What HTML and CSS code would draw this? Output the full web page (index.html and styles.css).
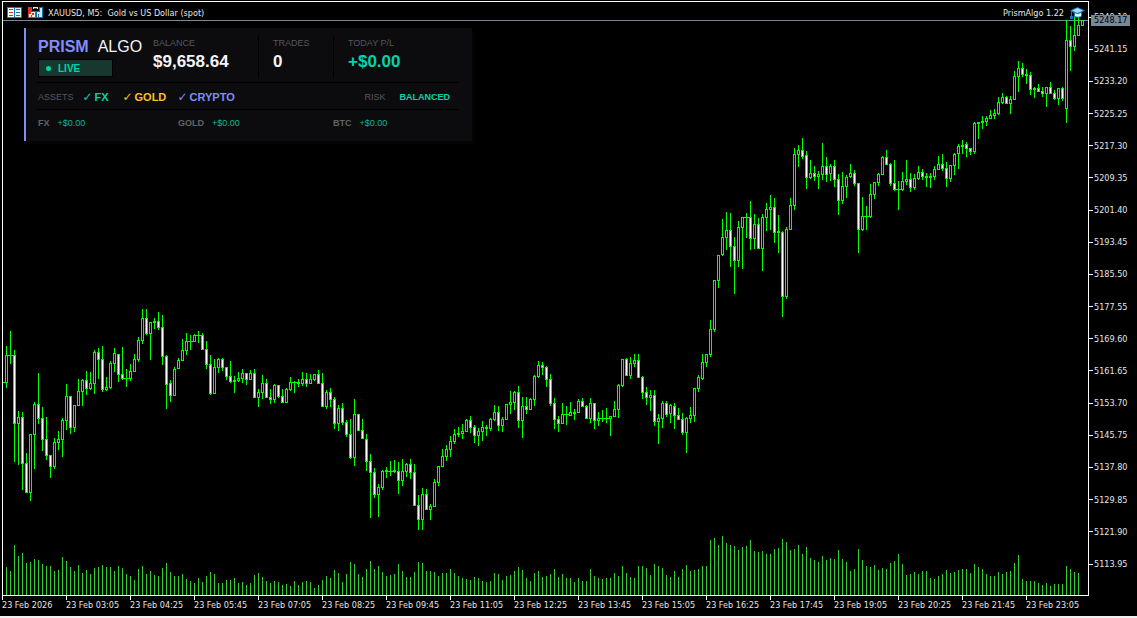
FILE: index.html
```
<!DOCTYPE html>
<html lang="en">
<head>
<meta charset="utf-8">
<title>XAUUSD, M5</title>
<link rel="stylesheet" href="styles.css">
</head>
<body>
<main class="terminal">
  <section class="plot">
    <svg class="chart" id="chart" viewBox="3 2 1085 593" preserveAspectRatio="none" role="img" aria-label="XAUUSD five minute candles with tick volume"></svg>

    <header class="titlebar">
      <svg class="icon" width="15" height="11" viewBox="0 0 15 11" shape-rendering="crispEdges" aria-hidden="true">
        <path fill="#d9362b" d="M0 0h8v11H0z"/><path fill="#1470b8" d="M7 0h8v11H7z"/>
        <path fill="#fff" d="M1 1h6v9H1z"/><path fill="#e4f4ff" d="M8 1h6v9H8z"/>
        <path fill="#d9362b" d="M2 2h4v1H2zM2 5h4v1H2zM2 8h4v1H2z"/>
        <path fill="#1470b8" d="M9 2h4v1H9zM9 5h4v1H9zM9 8h4v1H9z"/>
      </svg>
      <svg class="icon" width="15" height="11" viewBox="0 0 15 11" shape-rendering="crispEdges" aria-hidden="true">
        <path fill="#d9362b" d="M0 0h4v4h4v7H0z"/>
        <path fill="#ffe9e5" d="M1 1h2v4h4v5H4V8H3v2H1z"/>
        <path fill="#d9362b" d="M1 1h2v6H1zM4 6h2v2H4z"/>
        <path fill="#1470b8" d="M11 0h4v11H8V4h3z"/>
        <path fill="#c8e9ff" d="M12 1h2v9h-3V7h-1v3H9V5h3z"/>
        <path fill="#e8e8e8" d="M5 0h5v2H5z"/><path fill="#444" d="M6 1h3v1H6z"/>
      </svg>
      <h1 class="symbol">XAUUSD, M5:&nbsp; Gold vs US Dollar (spot)</h1>
      <span class="expert">PrismAlgo 1.22</span>
      <svg class="cap" width="15" height="12" viewBox="0 0 15 12" aria-hidden="true">
        <path fill="#1478c0" d="M7.500 0 15 3.500 12 5.200V9.500Q7.500 12 4 9.500V6L2 5v4h1v3H0V9h1V4.500L0 3.500z"/>
        <path fill="#a9dcff" d="M7.500 1 13 3.500 7.500 6 2 3.500z"/>
        <path fill="#e3f5ff" d="M5 6l2.500 1.200L11 6v3Q7.500 10.500 5 9z"/>
      </svg>
    </header>

    <section class="panel">
      <div class="row summary">
        <div class="brand">
          <h2 class="logo"><b>PRISM</b> <span>ALGO</span></h2>
          <div class="live"><i class="dot"></i>LIVE</div>
        </div>
        <div class="stat balance"><span class="caption">BALANCE</span><strong>$9,658.64</strong></div>
        <div class="stat trades"><span class="caption">TRADES</span><strong>0</strong></div>
        <div class="stat today"><span class="caption">TODAY P/L</span><strong class="up">+$0.00</strong></div>
      </div>
      <div class="row assets">
        <span class="caption">ASSETS</span>
        <label class="asset fx"><input type="checkbox" checked>FX</label>
        <label class="asset gold"><input type="checkbox" checked>GOLD</label>
        <label class="asset crypto"><input type="checkbox" checked>CRYPTO</label>
        <span class="caption risk">RISK</span>
        <b class="mode">BALANCED</b>
      </div>
      <div class="row results">
        <span><b>FX</b><em>+$0.00</em></span>
        <span><b>GOLD</b><em>+$0.00</em></span>
        <span><b>BTC</b><em>+$0.00</em></span>
      </div>
    </section>
  </section>

  <aside class="prices">
    <span>5249.10</span><span>5241.15</span><span>5233.20</span><span>5225.25</span><span>5217.30</span><span>5209.35</span>
    <span>5201.40</span><span>5193.45</span><span>5185.50</span><span>5177.55</span><span>5169.60</span><span>5161.65</span>
    <span>5153.70</span><span>5145.75</span><span>5137.80</span><span>5129.85</span><span>5121.90</span><span>5113.95</span>
    <output class="bid">5248.17</output>
  </aside>

  <footer class="times">
    <span>23 Feb 2026</span><span>23 Feb 03:05</span><span>23 Feb 04:25</span><span>23 Feb 05:45</span><span>23 Feb 07:05</span>
    <span>23 Feb 08:25</span><span>23 Feb 09:45</span><span>23 Feb 11:05</span><span>23 Feb 12:25</span><span>23 Feb 13:45</span>
    <span>23 Feb 15:05</span><span>23 Feb 16:25</span><span>23 Feb 17:45</span><span>23 Feb 19:05</span><span>23 Feb 20:25</span>
    <span>23 Feb 21:45</span><span>23 Feb 23:05</span>
  </footer>
</main>
<script src="chart.js"></script>
</body>
</html>
```

FILE: styles.css
```
* { box-sizing: border-box; }

body {
  margin: 0;
  background: #000;
  color: #e6e6e6;
  font: 9px/12px "DejaVu Sans Condensed", "DejaVu Sans", sans-serif;
  font-stretch: condensed;
}

.terminal {
  display: grid;
  grid-template-columns: minmax(0, 1fr) 48px;
  grid-template-rows: minmax(0, 1fr) 20px;
  height: 100vh;
  padding: 1px 0 0 2px;
  border-bottom: 2px solid #f0f0f0;
}

.plot {
  display: grid;
  grid-template: minmax(0, 1fr) / minmax(0, 1fr);
  border: 1px solid #fff;
}

.plot > * { grid-area: 1 / 1; }

.chart { display: block; width: 100%; height: 100%; }

.titlebar {
  display: flex;
  align-items: center;
  align-self: start;
  height: 21px;
  padding: 0 3px 0 4px;
}

.icon { margin-right: 6px; }
.icon + .icon { margin-right: 5px; }
.symbol { margin: 0 auto 0 0; font: inherit; }
.expert { margin-right: 6px; }

.panel {
  place-self: start;
  width: 448px;
  height: 113px;
  margin: 26px 0 0 21px;
  padding: 7px 13px 0 10px;
  border-left: 2px solid #818cf8;
  background: #0c0c0f;
  box-shadow: 3px 3px 0 #040405;
  font-family: "Liberation Sans", Arial, sans-serif;
  font-stretch: normal;
  color: #62626a;
}

.row { display: flex; padding-left: 2px; }
.caption { font-size: 9px; line-height: 12px; color: #56565e; }

.summary { height: 48px; border-bottom: 1px solid #000; }
.brand { width: 115px; }
.logo { display: flex; gap: 9px; margin: 2px 0 3px; font-size: 16px; line-height: 19px; font-weight: 400; color: #f4f4f5; }
.logo b { color: #818cf8; }

.live {
  display: flex;
  align-items: center;
  width: 75px;
  height: 18px;
  padding: 1px 0 0 7px;
  border: 1px solid #000;
  background: #16382f;
  color: #00d4aa;
  font-size: 10px;
  font-weight: 700;
}

.dot { width: 5px; height: 5px; margin-right: 7px; border-radius: 50%; background: #00d4aa; }

.stat { display: flex; flex-direction: column; height: 43px; padding-top: 2px; }
.stat strong { margin-top: 3px; font-size: 17px; line-height: 20px; color: #f4f4f5; }
.stat .up { color: #00d4aa; }
.balance { width: 105px; }
.trades { width: 75px; padding-left: 14px; border-left: 1px solid #000; }
.today { padding-left: 14px; border-left: 1px solid #000; }

.assets { align-items: center; height: 27px; padding-top: 2px; border-bottom: 1px solid #000; }
.asset { display: flex; align-items: center; font-size: 11px; font-weight: 700; }
.asset input { appearance: none; width: 12px; height: 12px; margin: 0; color: inherit; font: 12px/12px "DejaVu Sans", sans-serif; }
.asset input:checked::before { content: "✓"; }
.fx { width: 40px; margin-left: 9px; color: #00d4aa; }
.gold { width: 55px; color: #fbbf24; }
.crypto { color: #818cf8; }
.risk { margin-left: auto; }
.mode { margin: 0 9px 0 14px; color: #00d4aa; }

.results { padding-top: 7px; }
.results span:nth-child(1) { width: 140px; }
.results span:nth-child(2) { width: 155px; }
.results em { margin-left: 8px; font-style: normal; color: #0ab891; }

.prices {
  position: relative;
  display: flex;
  flex-direction: column;
  padding-bottom: 16px;
}

.prices span { display: flex; flex: 1; align-items: center; }
.prices span::before { content: ""; width: 4px; height: 1px; margin-right: 1px; background: #fff; }

.bid {
  position: absolute;
  top: 14px;
  left: 2px;
  width: 39px;
  padding-left: 3px;
  background: #778899;
  color: #000;
  line-height: 11px;
}

.times { display: flex; grid-column: 1 / -1; }
.times span { flex: 0 0 64px; line-height: 10px; white-space: nowrap; }
.times span::before { content: ""; display: block; width: 1px; height: 4px; background: #fff; }

.wick, .body { fill: #0f0; }
.bear { fill: #fff; }
.bull { fill: #000; }
.volume { fill: #32cd32; }
.level { fill: #778899; }
```

FILE: chart.js
```
// Each candle: high, body top, body bottom, low, and 1 when it closed down.
const candles = `
346,355,383,388 331,355,356,364 350,355,424,462,1 411,417,424,465 412,417,464,490,1 453,463,493,493,1 434,434,493,501 402,404,435,469 373,404,419,424,1 407,418,440,451,1
417,439,456,460,1 455,455,467,478,1 438,442,467,469 431,439,443,450 418,420,440,457 384,396,421,430 396,396,428,434,1 405,405,428,432 379,391,406,406 379,380,392,406
371,380,389,395,1 372,383,389,390 350,352,384,394 348,352,360,379,1 346,359,390,392,1 377,387,390,391 361,363,388,389 348,353,364,372 354,354,375,382,1 347,374,379,380,1
369,378,379,387 364,371,379,381 354,359,372,372 337,340,360,362 309,318,341,344 309,318,334,335,1 322,322,334,360 318,321,323,329 312,321,328,330,1 315,327,357,365,1
355,356,385,409,1 380,383,396,402,1 367,369,396,396 358,360,369,369 339,350,361,361 333,341,351,355 335,341,342,350 334,335,342,342 331,335,336,343 333,335,350,350,1
341,349,365,369,1 355,364,394,395,1 359,367,394,394 358,359,368,373 358,359,368,371,1 367,367,377,380,1 361,376,382,383,1 376,380,382,393 372,378,381,382 369,373,379,383
373,373,380,385,1 370,373,380,380 369,373,398,398,1 389,392,398,407 375,383,393,399 379,383,398,398,1 389,397,400,404,1 384,385,400,403 385,385,397,398,1 389,396,403,403,1
388,389,403,403 377,382,390,391 381,382,383,393 379,382,384,387 372,379,384,386 373,379,384,387,1 374,379,384,384 374,374,380,381 370,374,384,384,1 373,383,407,407,1
390,392,407,409 388,392,400,407,1 397,399,424,429,1 405,408,424,431 403,408,423,425,1 420,422,435,437,1 419,434,458,459,1 399,414,458,466 414,414,431,431,1 419,430,439,439,1
434,439,462,471,1 454,461,473,518,1 468,472,495,498,1 484,487,495,517 470,471,488,490 467,470,472,478 461,471,472,476 460,470,472,473 462,471,481,494,1 459,471,481,486
463,464,472,477 459,464,473,479,1 464,472,506,506,1 495,505,520,530,1 488,494,520,530 489,494,510,510,1 504,506,510,520 479,482,507,507 466,466,483,486 449,456,467,467
445,449,457,461 436,441,450,457 429,434,442,444 427,433,435,437 424,431,434,439 419,420,432,432 416,420,428,433,1 425,427,436,443,1 428,431,436,446 421,427,432,441
425,427,429,436 418,419,429,431 405,412,420,421 406,412,426,431,1 417,419,426,432 404,404,420,420 391,402,405,414 391,392,403,410 386,392,421,428,1 397,406,421,438
397,406,410,414,1 398,399,410,410 375,376,400,406 361,365,377,378 362,365,368,375,1 366,367,380,387,1 374,379,404,406,1 398,403,420,429,1 416,419,424,432,1 403,414,424,424
406,414,415,425 402,412,416,416 409,412,414,420 399,401,413,413 398,401,407,407,1 405,406,419,419,1 398,403,419,423 403,403,421,429,1 412,418,421,426 410,418,419,422
408,418,419,423 416,416,419,436 401,409,417,417 384,385,410,418 359,359,386,387 358,359,376,376,1 357,363,376,379 354,360,364,367 354,360,378,378,1 376,377,393,399,1
387,392,398,405,1 390,395,398,411 390,395,422,426,1 414,418,422,444 401,403,419,428 401,403,415,417,1 404,405,414,423 403,406,416,429,1 408,415,420,420,1 413,419,433,435,1
417,418,433,453 407,415,419,423 388,388,416,422 375,377,389,392 354,362,379,380 354,354,363,367 320,329,355,357 280,280,330,332 255,255,281,288 219,237,255,256
212,230,238,250 213,230,247,267,1 237,246,261,294,1 221,227,261,267 217,217,228,269 213,217,218,238 201,217,239,250,1 214,224,239,249 218,224,249,249,1 214,217,249,271
203,209,218,231 195,207,210,230 198,207,233,243,1 215,231,233,253 231,232,297,317,1 227,229,297,299 198,205,230,230 148,154,206,210 145,150,155,167 138,150,157,159,1
151,155,178,189,1 160,173,178,179 166,173,177,181,1 171,174,177,189 143,166,175,180 157,166,175,182,1 164,166,174,181 160,166,180,187,1 174,179,201,215,1 172,186,201,204
175,177,187,198 164,173,177,178 170,173,184,186,1 183,183,230,253,1 197,216,230,231 206,216,217,230 184,194,217,218 182,182,195,199 173,174,183,186 156,157,175,175
150,157,165,165,1 163,164,184,186,1 160,183,190,191,1 181,189,190,210 172,181,190,191 160,179,182,185 173,179,188,192,1 174,178,188,190 166,172,179,180 169,172,177,180,1
173,176,178,187 173,176,178,188 166,169,177,180 156,164,170,170 154,164,169,171,1 162,168,179,187,1 165,165,179,182 153,154,166,175 144,146,154,169 140,145,147,154
142,144,149,157,1 148,148,152,155,1 122,123,152,154 122,122,124,139 116,121,123,129 116,118,122,126 110,115,119,119 109,113,116,119 97,102,114,115 93,97,103,104
96,97,104,104,1 96,99,104,114 71,76,100,100 61,68,77,92 63,68,75,77,1 69,74,76,84 72,75,90,95,1 87,88,90,98 84,88,92,92,1 87,91,94,97,1
87,87,94,107 82,87,94,94,1 90,93,99,100,1 88,88,99,105 87,88,99,101,1 20,40,109,123 26,40,47,71,1 15,35,47,51 17,25,36,36 20,20,26,26
`.trim().split(/\s+/).map(c => c.split(",").map(Number));

const volumes = [
  28,24,50,39,42,32,33,36,35,31, 29,29,24,25,38,34,28,24,30,22, 25,21,27,28,30,28,28,24,29,27,
  21,19,15,26,29,21,24,20,19,27, 32,23,19,19,21,16,14,12,17,13, 19,23,21,12,12,15,15,17,12,13,
  10,12,20,22,18,14,12,14,13,10, 11,9,14,10,13,14,13,7,10,15, 19,17,25,22,13,21,33,31,21,18,
  26,34,26,29,
  23,19,20,21,31,24,18,18,23,33, 32,24,24,23,19,22,22,26,22,19, 17,16,15,18,17,14,13,14,22,21,
  15,19,20,24,28,25,17,14,22,24, 18,19,21,26,18,21,17,17,13,17, 14,14,26,19,17,16,17,17,22,19,
  29,22,18,17,29,29,27,20,31,29, 27,20,18,24,18,26,30,24,25,26, 29,29,55,57,50,59,52,50,49,45,
  48,49,55,44,43,
  44,41,41,46,47,56,53,45,46,50, 41,48,37,35,33,39,35,37,36,45, 36,33,24,26,46,35,29,28,30,25,
  27,26,32,34,41,31,20,21,23,21, 24,24,17,16,19,21,25,22,23,25, 26,26,22,31,28,26,21,19,19,23,
  21,23,24,32,40,16,14,14,14,12, 10,12,9,11,11,11,29,26,23,22
];

const FIRST_X = 6, STEP = 4, FLOOR = 595;
const rect = (cls, x, y, w, h) => `<rect class="${cls}" x="${x}" y="${y}" width="${w}" height="${h}"/>`;

let shapes = volumes.map((v, i) => rect("volume", FIRST_X + STEP * i, FLOOR - v, 1, v)).join("");
shapes += rect("level", 3, 20, 1085, 1);
shapes += rect("body", 3, 382, 2, 1);

candles.forEach(([high, top, bottom, low, down], i) => {
  const x = FIRST_X + STEP * i;
  const size = bottom - top;
  shapes += rect("wick", x, high, 1, low - high);
  shapes += size === 1 ? rect("body", x - 2, top, 5, 1) : rect("body", x - 1, top, 3, size);
  if (size > 2) shapes += rect(down ? "bear" : "bull", x, top + 1, 1, size - 2);
});

document.getElementById("chart").innerHTML = shapes;
```
